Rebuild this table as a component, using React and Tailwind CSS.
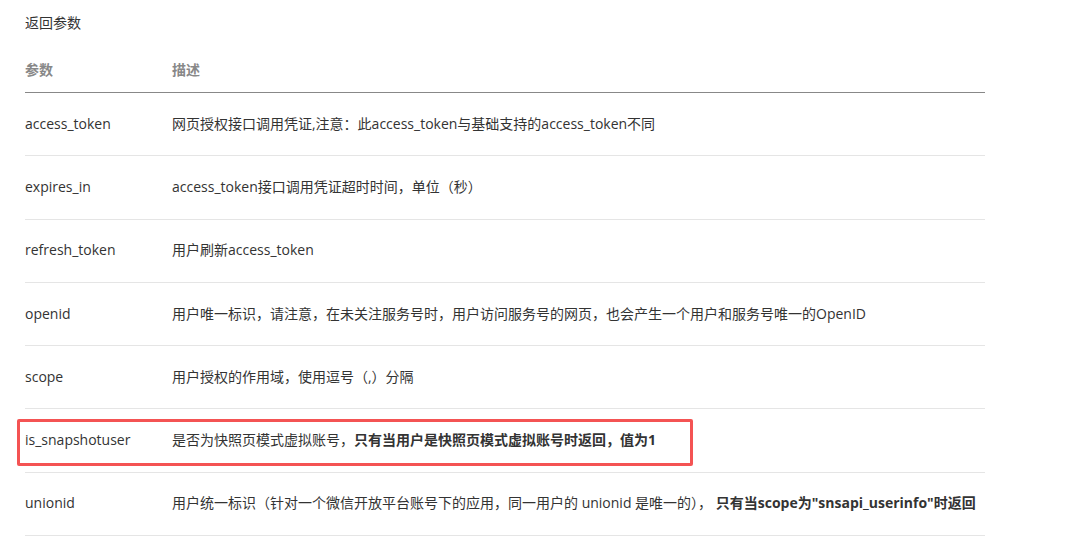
export default function App() {
  const rows = [
    ["access_token", <>网页授权接口调用凭证,注意：此access_token与基础支持的access_token不同</>],
    ["expires_in", <>access_token接口调用凭证超时时间，单位（秒）</>],
    ["refresh_token", <>用户刷新access_token</>],
    ["openid", <>用户唯一标识，请注意，在未关注服务号时，用户访问服务号的网页，也会产生一个用户和服务号唯一的OpenID</>],
    ["scope", <>用户授权的作用域，使用逗号（,）分隔</>],
    ["is_snapshotuser", <>是否为快照页模式虚拟账号，<b className="font-bold">只有当用户是快照页模式虚拟账号时返回，值为1</b></>],
    ["unionid", <>用户统一标识（针对一个微信开放平台账号下的应用，同一用户的 unionid 是唯一的）， <b className="font-bold">只有当scope为"snsapi_userinfo"时返回</b></>],
  ];
  return (
    <div
      className="relative w-[1082px] h-[559px] bg-white text-[#333] text-[14px] overflow-hidden"
      style={{ fontFamily: '"Open Sans", "Noto Sans CJK SC", sans-serif' }}
    >
      <div className="pl-[25px] pt-[13px]">
        <div className="h-[20px] leading-[20px]">返回参数</div>
        <div className="w-[960px] mt-[26px]">
          <div className="flex h-[34px] border-b border-[#888] text-[#888] font-bold leading-[22px]">
            <div className="w-[147px]">参数</div>
            <div>描述</div>
          </div>
          {rows.map(([k, v]) => (
            <div key={k} className="flex items-center h-[63.3px] border-b border-[#e5e5e5] pb-[2px]">
              <div className="w-[147px] shrink-0">{k}</div>
              <div className="whitespace-nowrap">{v}</div>
            </div>
          ))}
        </div>
      </div>
      <div className="absolute left-[17px] top-[419px] w-[676px] h-[47px] border-[3px] border-[#f45353] rounded-[2px]" />
    </div>
  );
}
